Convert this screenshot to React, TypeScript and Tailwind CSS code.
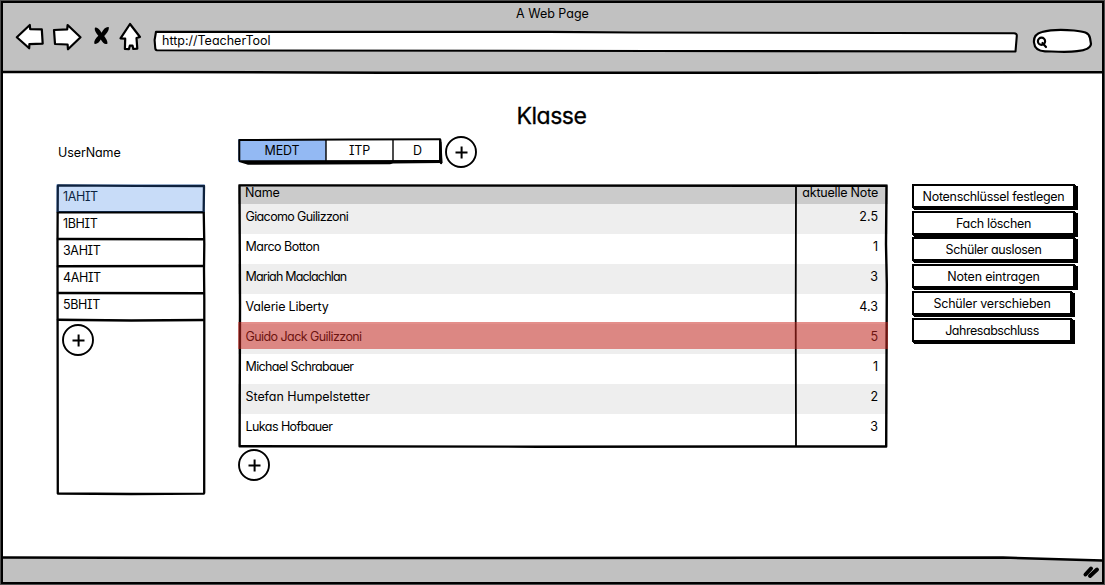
import type { ReactNode } from "react";

const tabs = [
  { label: "MEDT", style: "w-[88px] tracking-[-0.1px]", active: true },
  { label: "ITP", style: "w-[67px] tracking-[-0.2px]", active: false },
  { label: "D", style: "w-[49px]", active: false },
];

const classes = ["1AHIT", "1BHIT", "3AHIT", "4AHIT", "5BHIT"];

const students = [
  { name: "Giacomo Guilizzoni", grade: "2.5", style: "tracking-[-0.63px]" },
  { name: "Marco Botton", grade: "1", style: "tracking-[-0.5px]" },
  { name: "Mariah Maclachlan", grade: "3", style: "tracking-[-0.82px]" },
  { name: "Valerie Liberty", grade: "4.3", style: "tracking-[-0.2px]" },
  { name: "Guido Jack Guilizzoni", grade: "5", style: "tracking-[-0.57px]" },
  { name: "Michael Schrabauer", grade: "1", style: "tracking-[-0.66px]" },
  { name: "Stefan Humpelstetter", grade: "2", style: "tracking-[-0.05px]" },
  { name: "Lukas Hofbauer", grade: "3", style: "tracking-[-0.57px]" },
];

const actions = [
  { label: "Notenschlüssel festlegen", style: "h-[27px] w-[163px] tracking-[-0.3px]" },
  { label: "Fach löschen", style: "h-[26px] w-[163px] tracking-[-0.33px]" },
  { label: "Schüler auslosen", style: "h-[27px] w-[163px] tracking-[-0.37px]" },
  { label: "Noten eintragen", style: "h-[27px] w-[163px] tracking-[-0.2px]" },
  { label: "Schüler verschieben", style: "h-[27px] w-[160px] tracking-[-0.2px]" },
  { label: "Jahresabschluss", style: "h-[27px] w-[160px] tracking-[-0.47px]" },
];

function Sketch({ w, h, children }: { w: number; h: number; children: ReactNode }) {
  return (
    <svg
      className="pointer-events-none absolute top-0 left-0 overflow-visible"
      width={w}
      height={h}
      viewBox={`0 0 ${w} ${h}`}
      fill="none"
      stroke="#000"
      strokeWidth="2.4"
      strokeLinecap="round"
      strokeLinejoin="round"
    >
      {children}
    </svg>
  );
}

function PlusButton() {
  return (
    <button className="block size-8 shrink-0" aria-label="+">
      <svg width="32" height="32" viewBox="0 0 32 32" fill="#fff" stroke="#000" strokeWidth="1.9">
        <circle cx="16" cy="16" r="15" />
        <path d="M10.5 16.6h12M16.6 10.6v12" strokeWidth="2" />
      </svg>
    </button>
  );
}

function Toolbar() {
  return (
    <header className="relative flex h-[70px] shrink-0 flex-col bg-[#c1c1c1]">
      <div className="h-[25px] pt-[1px] text-center leading-5">A Web Page</div>
      <div className="flex h-[26px] items-start pl-[12px]">
        <svg
          className="-mt-[6px] shrink-0"
          width="130"
          height="30"
          viewBox="15 22 130 30"
          fill="#fff"
          stroke="#000"
          strokeWidth="2.2"
          strokeLinejoin="round"
          strokeLinecap="round"
        >
          <path d="M16.800 37.200 29.800 25l.4 4.200 11.600.2.900 14.200-13.300.5-.2 4.200Z" />
          <path d="M54 30l13.200-.7.400-4.300L80.500 37.200 68 49.300 67.600 44.500 55 44Z" />
          <path d="M130 24l10 13-3.500 1 .8 10.600-4 .4-.8-3.500-2.700.2-.9 3.500-4-.2.3-10.400-4.700-.2Z" />
          <path
            d="M94.800 28c2-1.400 4.500 1 6.700 4.700C103.500 29 106 26.500 108.700 27c.7 3-1.700 6-4.500 9 1.800 2.700 3.500 5 3.300 7.500-2.200 1.700-4.800-.5-6.700-4-1.700 3-4 5-6.500 4.300-.5-2.800 1.200-5.300 4-8-2.200-2.700-4-5.300-3.500-7.800Z"
            fill="#000"
            stroke="none"
          />
        </svg>
        <div className="relative mt-[2px] ml-2 h-[22px] w-[866px]">
          <Sketch w={866} h={22}>
            <path d="M3 1.800 395 1.900 480 2.500 861 3.300Q864 3.500 863.800 6L862.500 21.500 500 21 4 20.300Q2.200 20 2.200 17.500L1.600 10Z" fill="#fff" strokeWidth="2.100" />
          </Sketch>
          <div className="relative pl-[9px] leading-[22px]">http://TeacherTool</div>
        </div>
        <svg className="ml-[13px] shrink-0" width="62" height="27" viewBox="1032 28 62 27" fill="#fff" stroke="#000" strokeWidth="2.200" strokeLinecap="round">
          <path d="M1034 42.500C1033.500 37 1036 33.500 1042 32 1051 29.500 1064 29.500 1074 30.500 1084 31.500 1089 32.500 1090 38L1091 44C1090.500 49 1084 50.500 1077 51.200 1067 52.500 1054 51.500 1045 51.300 1038 51 1034.500 48.500 1034 42.500Z" />
          <circle cx="1041.500" cy="41.300" r="3.600" />
          <path d="M1042.500 43 1046 47" />
        </svg>
      </div>
      <Sketch w={1099} h={70}>
        <path d="M0 69.100H150L380 69.700H800L1099 69.200" strokeWidth="2.500" />
      </Sketch>
    </header>
  );
}

function Tabs() {
  return (
    <div className="relative flex h-7 w-[204px] pt-px pb-1">
      {tabs.map((t) => (
        <div key={t.label} className={`${t.style} pt-px text-center leading-[21px] ${t.active ? "bg-[#93b9f3]" : "bg-white"}`}>
          {t.label}
        </div>
      ))}
      <Sketch w={204} h={28}>
        <path d="M1.300 22V2L110 1.400 202 1.200" strokeWidth="2" />
        <path d="M88 2V23M155 2V23" strokeWidth="1.400" />
        <path d="M1 22.300 201 22 201 1 203.500 4 204.500 25 155 25.500 152 26.300 10 26.800 1 24Z" fill="#000" stroke="none" />
        <path d="M202.200 2 203 25" strokeWidth="2.400" />
      </Sketch>
    </div>
  );
}

function ClassList() {
  return (
    <div className="relative h-[311px] w-[149px] pt-px pl-px">
      <ul>
        {classes.map((c, i) => (
          <li key={c} className="relative h-[27px] pl-[6px] leading-[23px] tracking-[-0.35px]">
            {c}
            {i === 0 && <span className="absolute -top-px -left-px z-10 h-7 w-[149px] bg-[#347ee5]/27" />}
          </li>
        ))}
      </ul>
      <div className="mt-[4px] pl-[5px]">
        <PlusButton />
      </div>
      <Sketch w={149} h={311}>
        <path d="M2 1.400 80 1.800 148 2M1.800 2 1.500 60 1.800 309.500 75 310 148 309.600M148 2.500 147.700 26 148.300 60 148 85 148.300 115 148.200 309" strokeWidth="2.300" />
        <path d="M2 28.300H147M2 55 147 55.300M2 82.300 147 82M2 109 147 109.300M2 135.700 75 136.500 147 136" strokeWidth="2.600" />
      </Sketch>
    </div>
  );
}

function GradeTable() {
  return (
    <div className="relative h-[264px] w-[650px]">
      <div className="flex h-5 justify-between bg-[#cbcbcb] pr-[10px] pl-[7px] leading-[17px] tracking-[-0.2px]">
        <span>Name</span>
        <span>aktuelle Note</span>
      </div>
      {students.map((s, i) => (
        <div
          key={s.name}
          className={`flex h-[30px] justify-between pr-[10px] pl-[7.500px] leading-[25px] ${i % 2 === 0 ? "bg-[#eeeeee]" : "bg-white"}`}
        >
          <span className={s.style}>{s.name}</span>
          <span>{s.grade}</span>
        </div>
      ))}
      <Sketch w={650} h={264}>
        <path d="M1.500 1.400 300 1.600 648.500 1.800 648 60 648.800 100 648.200 262.500 300 262.700 1.600 262.300 2 120Z" strokeWidth="2.400" />
        <path d="M558 2 557.700 130 558 262" strokeWidth="1.800" />
      </Sketch>
      <div className="absolute top-[138px] left-0 h-[27px] w-[650px] bg-[#cc2820]/52" />
    </div>
  );
}

function Actions() {
  return (
    <div className="flex flex-col items-start">
      {actions.map((a) => (
        <button key={a.label} className={`${a.style} flex items-start pb-px`}>
          <span className="block h-6 w-full border-2 border-black bg-white text-center leading-[22px] whitespace-nowrap shadow-[1px_1px_0_#000,2px_2px_0_#000,3px_2px_0_#000]">
            {a.label}
          </span>
        </button>
      ))}
    </div>
  );
}

export default function App() {
  return (
    <div className="h-[585px] w-[1105px] border border-[#4d4d4d] bg-white font-['Inter',sans-serif] text-[12.500px] text-black [font-feature-settings:'cv11','cv08']">
      <div className="flex h-[583px] flex-col overflow-hidden border-2 border-black">
        <Toolbar />
        <main className="flex min-h-0 grow flex-col">
          <h1 className="mt-[30px] h-[33px] pr-[2px] text-center text-[23px] leading-[26px] tracking-[-0.5px] [-webkit-text-stroke:0.3px_#000]">Klasse</h1>
          <div className="flex h-[48px] pl-[55px]">
            <div className="w-[180px] pt-[7px] leading-5 tracking-[-0.1px]">UserName</div>
            <div className="pt-[2px]">
              <Tabs />
            </div>
            <div className="ml-[3px]">
              <PlusButton />
            </div>
          </div>
          <div className="flex pl-[53px]">
            <ClassList />
            <div className="ml-[33px]">
              <GradeTable />
              <div className="mt-px">
                <PlusButton />
              </div>
            </div>
            <div className="ml-[24px]">
              <Actions />
            </div>
          </div>
        </main>
        <footer className="relative h-[25px] shrink-0">
          <Sketch w={1099} h={25}>
            <path d="M0 .5 220 1H400L1000 .5 1099 3.500V25H0Z" fill="#c1c1c1" stroke="none" />
            <path d="M0 .5 220 1H400L1000 .5 1099 3.500" strokeWidth="2.500" />
            <path d="M1082.500 17.500 1088 11.500M1087 19 1094 12.500" strokeWidth="4" />
          </Sketch>
        </footer>
      </div>
    </div>
  );
}
